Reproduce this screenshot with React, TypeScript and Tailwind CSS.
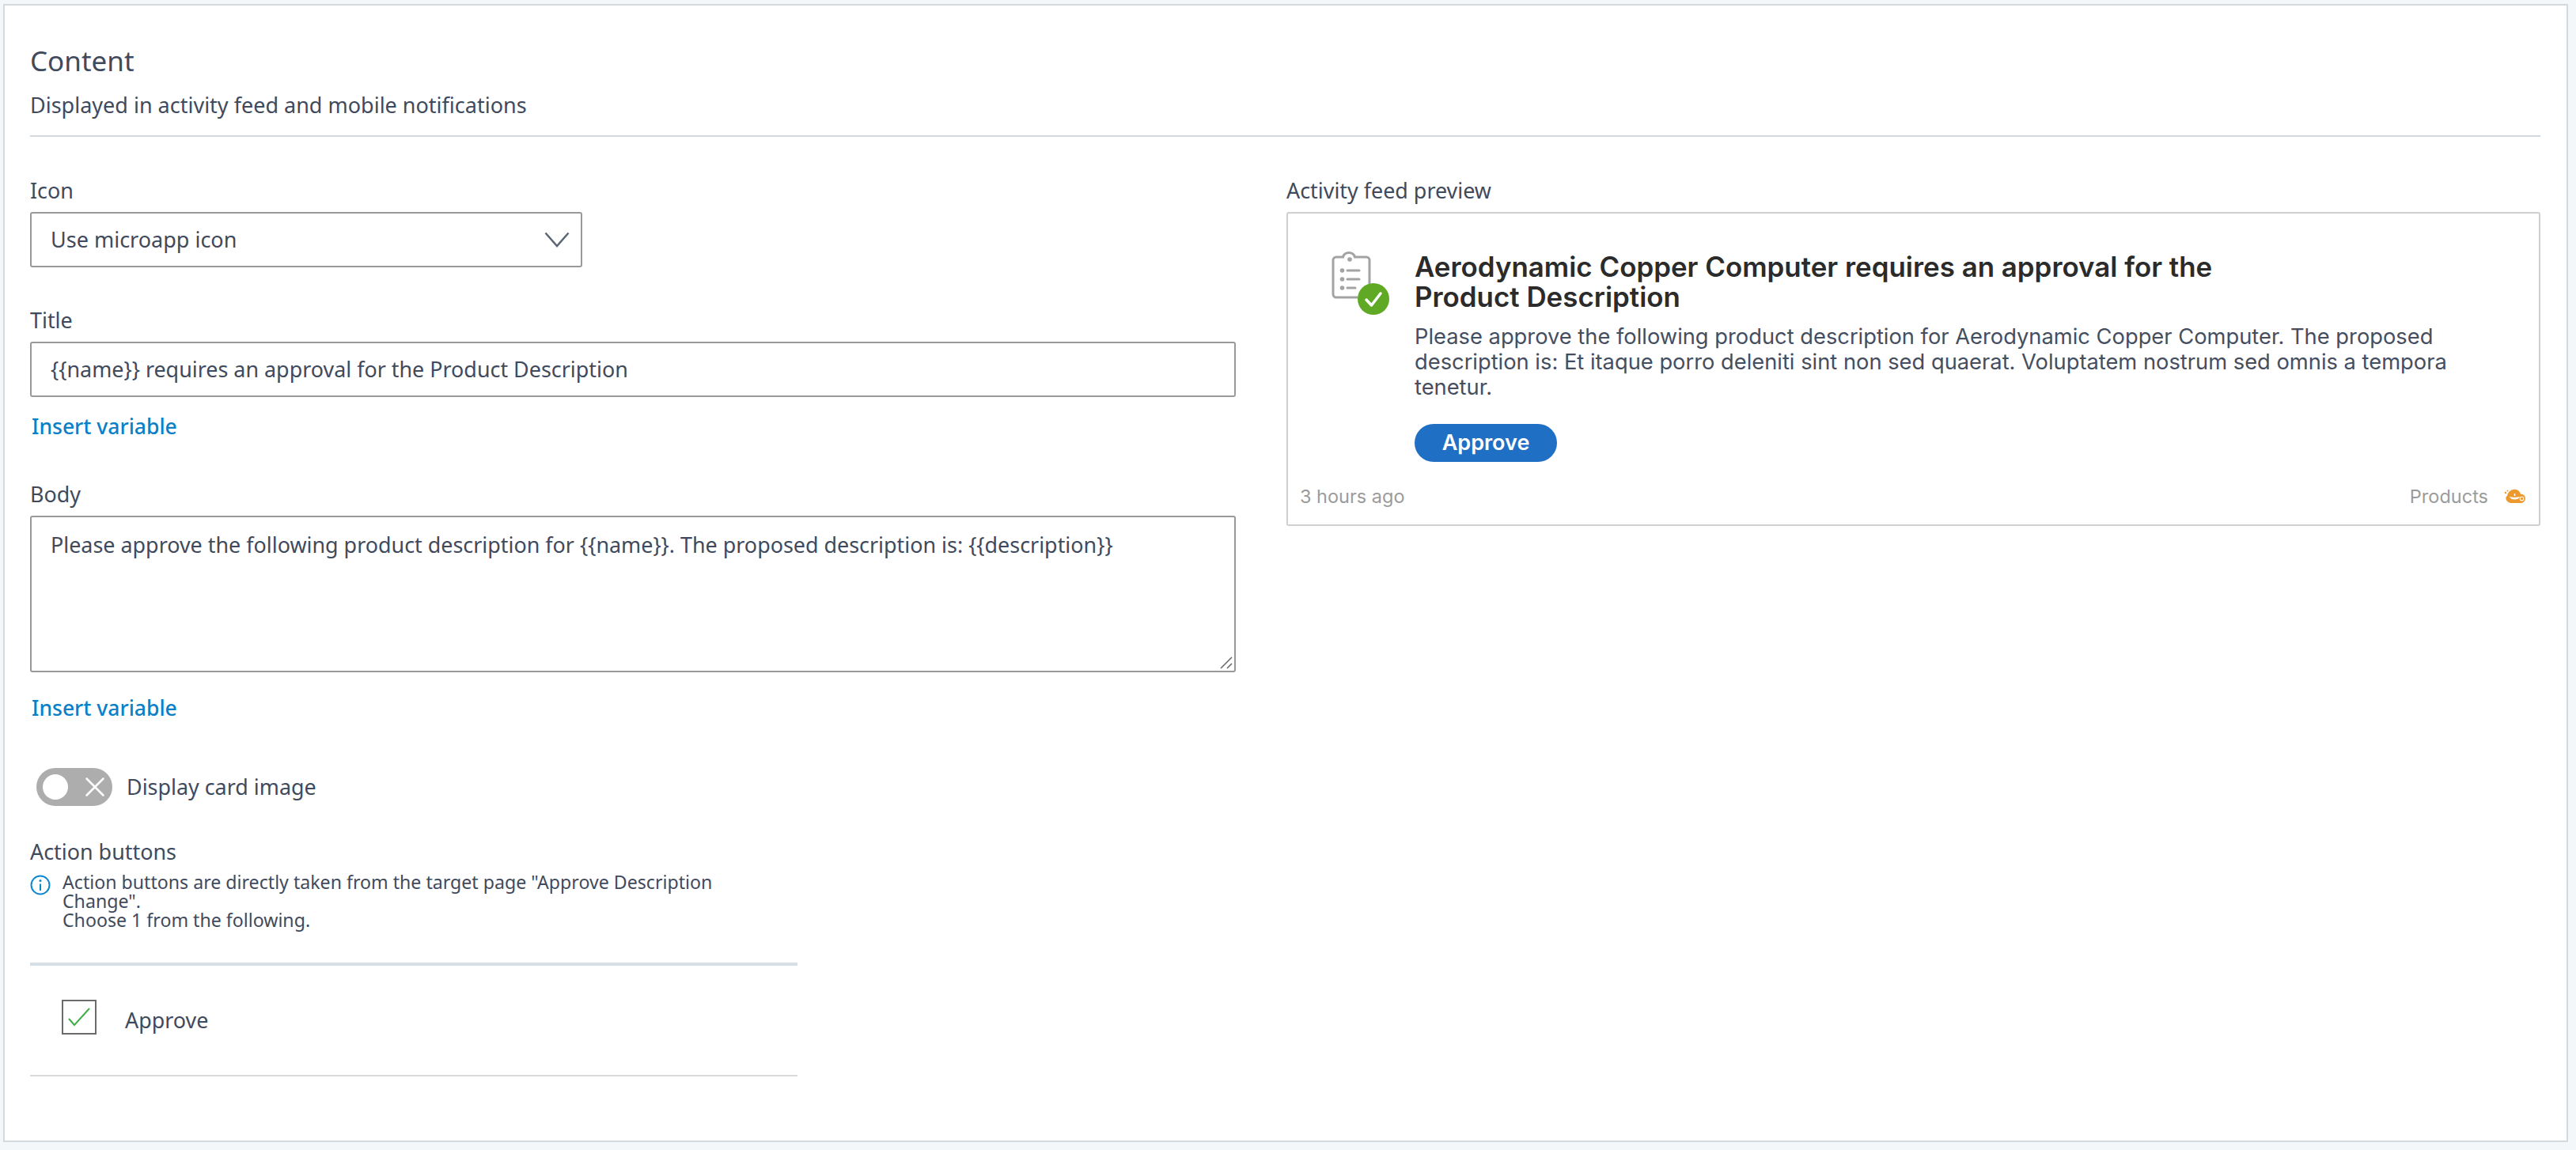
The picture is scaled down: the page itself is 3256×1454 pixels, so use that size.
const noto = "font-['Noto_Sans',sans-serif]";
const preview = "font-['Inter',sans-serif]";

function FieldLabel({ children }: { children: string }) {
  return <div className="h-[38px] text-[26.900px] leading-[38px] text-[#3f4a5c]">{children}</div>;
}

function InsertVariable({ className }: { className: string }) {
  return <div className={`${className} pl-0.5 text-[26.500px] leading-[38px] font-medium text-[#0b7fc7]`}>Insert variable</div>;
}

function ClipboardIcon() {
  return (
    <svg width="76" height="82" viewBox="0 0 76 82" fill="none" className="shrink-0">
      <path d="M34 58H7a4 4 0 0 1-4-4V11a4 4 0 0 1 4-4h8.500c1-3.500 3.500-5.500 7.500-5.500s6.500 2 7.500 5.500H45a4 4 0 0 1 4 4v30" stroke="#a3a3a3" strokeWidth="3" />
      <circle cx="24" cy="10" r="2.800" fill="#a3a3a3" />
      <circle cx="14.500" cy="24" r="2.800" fill="#a3a3a3" />
      <circle cx="14.500" cy="35" r="2.800" fill="#a3a3a3" />
      <circle cx="14.500" cy="46" r="2.800" fill="#a3a3a3" />
      <path d="M21 24h15M21 35h15M21 46h10" stroke="#a3a3a3" strokeWidth="3" strokeLinecap="round" />
      <circle cx="54" cy="60" r="20" fill="#5fa925" />
      <path d="M45 61l6.500 7L63 53" stroke="#fff" strokeWidth="3.500" strokeLinecap="round" strokeLinejoin="round" />
    </svg>
  );
}

function LampIcon() {
  return (
    <svg width="28" height="20" viewBox="0 0 28 20" className="shrink-0">
      <circle cx="2" cy="5" r="1.200" fill="#ec9a2f" />
      <circle cx="4.500" cy="2.500" r="1" fill="#ec9a2f" />
      <path d="M4 9C5 3.500 9.500.5 14 .8c3.500.2 6 2.500 7 5.700 3.500.2 6 2.600 6 5.800 0 3-2.200 5.200-5 5.700H9.500C6 18 3 15.500 2.500 13 2 11 2.500 9.800 4 9z" fill="#ec9a2f" />
      <path d="M7 10c2 1 10 1 13 0-1 2.500-3 3.500-6.500 3.500S8 12.500 7 10z" fill="#fff" />
      <circle cx="22.500" cy="12.500" r="2.300" stroke="#fff" strokeWidth="1.100" fill="none" />
      <path d="M13.500 6v3" stroke="#fff" strokeWidth="1.500" />
    </svg>
  );
}

export default function App() {
  return (
    <div className={`h-[1454px] w-[3256px] overflow-hidden bg-[#f3f7fa] pt-[5px] pr-[10px] pb-[10px] pl-1 ${noto}`}>
      <div className="h-full border-2 border-[#d4d9de] bg-white pt-[45px] pr-[33px] pl-[32px]">
        <div className="h-[50px] text-[35px] leading-[50px] text-[#3f4a5c]">Content</div>
        <div className="mt-3 h-[38px] text-[27px] leading-[38px] text-[#3f4a5c]">Displayed in activity feed and mobile notifications</div>
        <div className="mt-[19px] h-0.5 bg-[#d4d9de]" />

        <div className="mt-[49px] flex gap-16">
          <div className="w-[1524px] shrink-0">
            <FieldLabel>Icon</FieldLabel>
            <div className="mt-2 flex h-[70px] w-[698px] items-center justify-between rounded-[3px] border-2 border-[#9a9a9a] pr-[14px] pl-6 text-[27px] text-[#3f4a5c]">
              Use microapp icon
              <svg width="32" height="20" viewBox="0 0 32 20" fill="none">
                <path d="M1.500 1.500L16 18 30.500 1.500" stroke="#5b6676" strokeWidth="2.500" />
              </svg>
            </div>

            <div className="mt-12"><FieldLabel>Title</FieldLabel></div>
            <div className="mt-2 flex h-[70px] items-center rounded-[3px] border-2 border-[#9a9a9a] pl-6 text-[26.900px] text-[#3f4a5c]">
              {"{{name}} requires an approval for the Product Description"}
            </div>
            <InsertVariable className="mt-[18px]" />

            <div className="mt-12"><FieldLabel>Body</FieldLabel></div>
            <div className="relative mt-2 h-[198px] rounded-[3px] border-2 border-[#9a9a9a] pt-4 pl-6 text-[26.900px] leading-[38px] text-[#3f4a5c]">
              {"Please approve the following product description for {{name}}. The proposed description is: {{description}}"}
              <svg width="16" height="16" viewBox="0 0 16 16" className="absolute right-0.5 bottom-0.5">
                <path d="M1 15L15 1M9 15l6-6" stroke="#666" strokeWidth="1.500" />
              </svg>
            </div>
            <InsertVariable className="mt-[26px]" />

            <div className="mt-[57px] flex items-center gap-[18px] pl-2">
              <div className="flex h-12 w-24 items-center justify-between rounded-full bg-[#adadad] pr-[10px] pl-2">
                <div className="size-8 rounded-full bg-white" />
                <svg width="24" height="24" viewBox="0 0 24 24">
                  <path d="M1.500 1.500l21 21M22.500 1.500l-21 21" stroke="#fff" strokeWidth="2.500" strokeLinecap="round" />
                </svg>
              </div>
              <span className="text-[26.900px] leading-[38px] text-[#3f4a5c]">Display card image</span>
            </div>

            <div className="mt-[39px]"><FieldLabel>Action buttons</FieldLabel></div>
            <div className="mt-[7px] flex w-[970px] gap-[15px]">
              <svg width="26" height="26" viewBox="0 0 26 26" fill="none" className="mt-[3px] shrink-0">
                <circle cx="13" cy="13" r="11.500" stroke="#0b86d1" strokeWidth="2" />
                <circle cx="13" cy="7.500" r="1.500" fill="#0b86d1" />
                <path d="M13 11.500V20" stroke="#0b86d1" strokeWidth="2" />
              </svg>
              <div className="w-[860px] text-[23.150px] leading-6 text-[#3f4a5c]">
                Action buttons are directly taken from the target page "Approve Description Change".
                <br />
                Choose 1 from the following.
              </div>
            </div>

            <div className="mt-[42px] flex h-[144px] w-[970px] items-center gap-[36px] border-t-4 border-b-2 border-t-[#d6dfe6] border-b-[#d9d9d9] pl-10">
              <div className="mb-2 flex size-[44px] items-center justify-center border-2 border-[#6b6b6b]">
                <svg width="30" height="24" viewBox="0 0 30 24" fill="none">
                  <path d="M2 14l7 8L28 1" stroke="#3fae49" strokeWidth="2" />
                </svg>
              </div>
              <span className="text-[26.900px] leading-[38px] text-[#3f4a5c]">Approve</span>
            </div>
          </div>

          <div className="flex-1">
            <FieldLabel>Activity feed preview</FieldLabel>
            <div className={`mt-2 h-[397px] rounded-[3px] border-2 border-[#cfcfcf] pt-12 ${preview}`}>
              <div className="flex pl-[54px]">
                <ClipboardIcon />
                <div className="ml-[30px] w-[1340px]">
                  <div className="w-[1060px] text-[34.900px] leading-[38px] font-semibold text-[#2b2b2b]">
                    Aerodynamic Copper Computer requires an approval for the Product Description
                  </div>
                  <div className="mt-4 text-[27.300px] leading-[32px] text-[#454e5f]">
                    Please approve the following product description for Aerodynamic Copper Computer. The proposed description is: Et itaque porro deleniti sint non sed quaerat. Voluptatem nostrum sed omnis a tempora tenetur.
                  </div>
                  <div className="mt-[30px] flex h-12 w-[180px] items-center justify-center rounded-full bg-[#1f6fc5] text-[27px] font-semibold text-white">
                    Approve
                  </div>
                </div>
              </div>
              <div className="mt-7 flex items-center justify-between pr-4 pl-[15px] text-[23.500px] leading-[32px] text-[#9b9b9b]">
                <span>3 hours ago</span>
                <span className="flex items-center gap-5">Products <LampIcon /></span>
              </div>
            </div>
          </div>
        </div>
      </div>
    </div>
  );
}
